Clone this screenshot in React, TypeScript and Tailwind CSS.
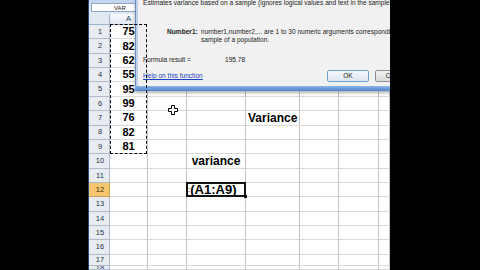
import React from 'react';

const values: Record<number, string> = {
  1: '75',
  2: '82',
  3: '62',
  4: '55',
  5: '95',
  6: '99',
  7: '76',
  8: '82',
  9: '81',
};

const cols = ['A', 'B', 'C', 'D', 'E', 'F', 'G'];
const rowNums = Array.from({ length: 18 }, (_, i) => i + 1);

const CellCursor: React.FC = () => (
  <svg width="10" height="10" viewBox="0 0 10 10" className="absolute left-[80px] top-[105px]">
    <path
      d="M3.5 0.5h3v3h3v3h-3v3h-3v-3h-3v-3h3z"
      fill="#fff"
      stroke="#000"
      strokeWidth="1"
    />
  </svg>
);

const Dialog: React.FC = () => (
  <div className="absolute left-[47px] top-0 w-[300px] h-[91px] flex flex-col shadow-[0_2px_3px_rgba(0,0,0,0.3)] text-[6.6px] text-[#1b1b1b]">
    <div className="flex flex-1">
      <div className="w-[3px] bg-[#bcd1ea] border-l border-[#6d8db8]" />
      <div className="flex-1 bg-[#f1f1f1] pl-[5px] whitespace-nowrap">
        <div className="h-[8px] leading-[8px] mt-[-1.5px]">
          Estimates variance based on a sample (ignores logical values and text in the sample).
        </div>
        <div className="flex mt-[21.5px] ml-[24px] leading-[8px]">
          <span className="w-[34px] font-bold">Number1:</span>
          <span>
            number1,number2,... are 1 to 30 numeric arguments corresponding to a
            <br />
            sample of a population.
          </span>
        </div>
        <div className="flex mt-[12px] leading-[8px]">
          <span className="w-[82px]">Formula result =</span>
          <span>195.78</span>
        </div>
        <div className="flex items-center mt-[6px] h-[12px]">
          <span className="w-[184px] text-[#1f3fbf] underline">Help on this function</span>
          <div className="w-[42px] h-[12px] flex items-center justify-center border border-[#6f9fd0] rounded-[2px] bg-gradient-to-b from-[#f6f9fc] to-[#dde6ef]">
            OK
          </div>
          <div className="ml-[6px] w-[42px] h-[12px] flex items-center justify-center border border-[#8e8e8e] rounded-[2px] bg-gradient-to-b from-[#f4f4f4] to-[#dadada]">
            Cancel
          </div>
        </div>
      </div>
    </div>
    <div className="h-[5px] bg-gradient-to-b from-[#8db4e6] to-[#4f84cc]" />
  </div>
);

export default function App() {
  return (
    <div className="w-[480px] h-[270px] flex bg-black overflow-hidden font-['Liberation_Sans',Arial,sans-serif]">
      <div className="w-[88px] shrink-0 bg-black" />
      <div className="relative w-[302px] shrink-0 h-full overflow-hidden flex">
        <div className="w-px bg-[#2a4775]" />
        <div className="flex-1 flex flex-col bg-white min-h-0">
          {/* name box / formula bar strip */}
          <div className="h-[3px] shrink-0 bg-[#c3d6ee]" />
          <div className="h-[9px] shrink-0 flex bg-[#dbe5f2]">
            <div className="ml-[2px] w-[58px] bg-white border border-[#8ea6c6] flex items-center justify-center text-[6px] leading-none text-[#222]">
              VAR
            </div>
          </div>
          <div className="h-[2px] shrink-0 bg-[#dfe7f2]" />

          <div className="flex-1 min-h-0 overflow-hidden grid grid-cols-[21px_38px_39px_59px_54px_39px_40px_1fr] grid-rows-[11px_repeat(16,14.36px)_11px_1fr]">
            {/* header row */}
            <div className="bg-[#e3e9f1] border-r border-b border-[#9eb3cc]" />
            {cols.map((c) => (
              <div
                key={c}
                className="flex items-center justify-center bg-gradient-to-b from-[#f7f9fc] to-[#e2e8f1] border-r border-b border-[#a6b8cf] text-[7.5px] leading-none text-[#27415f]"
              >
                {c}
              </div>
            ))}

            {rowNums.map((r) => (
              <React.Fragment key={r}>
                <div
                  className={
                    r === 12
                      ? 'min-h-0 overflow-hidden flex items-center justify-center pl-[2px] bg-[#f6c56f] border-r border-b border-[#c9a25a] text-[7.5px] leading-none text-[#3a2a10]'
                      : 'min-h-0 overflow-hidden flex items-center justify-center pl-[2px] bg-[#e8ebf0] border-r border-b border-[#aebbcc] text-[7.5px] leading-none text-[#22364f]'
                  }
                >
                  {r}
                </div>
                {cols.map((c) => (
                  <div
                    key={c}
                    className={
                      c === 'A' && r === 1
                        ? 'relative flex items-center border-r border-b border-r-[#c3c3c3] border-b-[#d9d9d9] text-black'
                        : 'relative min-h-0 flex items-center border-r border-b border-r-[#c3c3c3] border-b-[#d9d9d9] text-black'
                    }
                  >
                    {c === 'A' && values[r] && (
                      <span className="w-full text-center text-[11px] font-bold leading-none">{values[r]}</span>
                    )}
                    {c === 'A' && r === 1 && (
                      <div className="absolute left-0 top-[-1px] w-[37px] h-[130px] border border-dashed border-black z-10" />
                    )}
                    {c === 'D' && r === 7 && (
                      <span className="pl-[2px] text-[12px] font-bold leading-none">Variance</span>
                    )}
                    {c === 'C' && r === 10 && (
                      <span className="w-full text-center text-[12px] font-bold leading-none">variance</span>
                    )}
                    {c === 'C' && r === 12 && (
                      <>
                        <span className="pl-[1px] text-[8px] leading-none">:</span>
                        <span className="text-[13px] font-bold leading-none">(A1:A9)</span>
                        <div className="absolute left-[-1px] top-[-1px] right-[-1px] bottom-[-1px] border-2 border-[#111] z-10" />
                        <div className="absolute right-[-2px] bottom-[-2px] w-[3px] h-[3px] bg-[#111] z-10" />
                      </>
                    )}
                  </div>
                ))}
              </React.Fragment>
            ))}
          </div>
        </div>
        <Dialog />
        <CellCursor />
      </div>
      <div className="flex-1 bg-black" />
    </div>
  );
}
